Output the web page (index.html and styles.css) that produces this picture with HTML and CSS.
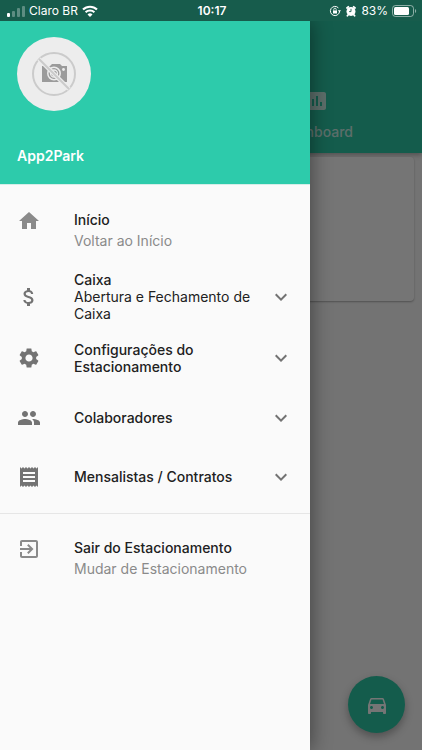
FILE: index.html
```html
<!DOCTYPE html>
<html lang="pt-BR">
<head>
<meta charset="utf-8">
<meta name="viewport" content="width=device-width, initial-scale=1">
<title>App2Park</title>
<link rel="stylesheet" href="styles.css">
</head>
<body>
<div class="screen">
  <div class="status">
    <div class="status-side">
      <svg class="signal" viewBox="0 0 18 12" aria-hidden="true">
        <rect x="0" y="8" width="3" height="4" rx="1" fill="#fff"/>
        <g fill="#fff" opacity=".3"><rect x="5" y="6" width="3" height="6" rx="1"/><rect x="10" y="3" width="3" height="9" rx="1"/><rect x="15" y="1" width="3" height="11" rx="1"/></g>
      </svg>
      <span>Claro BR</span>
      <svg class="wifi" viewBox="0 0 16 12" aria-hidden="true">
        <g fill="none" stroke="#fff" stroke-width="2.1"><path d="M1 4.6a10 10 0 0 1 14 0"/><path d="M3.6 7.3a6.3 6.3 0 0 1 8.8 0"/></g>
        <path d="M8 12 5.5 9.4a3.6 3.6 0 0 1 5 0z" fill="#fff"/>
      </svg>
    </div>
    <time class="clock">10:17</time>
    <div class="status-side status-end">
      <svg class="mini" viewBox="0 0 12 12" aria-hidden="true">
        <path d="M10.600 6A4.600 4.600 0 1 1 9.400 2.900" fill="none" stroke="#fff" stroke-width="1"/>
        <path d="M8.800 5.200h3.200L10.500 7.300z" fill="#fff"/>
        <rect x="4" y="5.500" width="4" height="3" fill="#fff"/>
        <path d="M4.800 5.600V4.400a1.200 1.200 0 0 1 2.400 0v1.200" fill="none" stroke="#fff" stroke-width=".8"/>
      </svg>
      <svg class="mini" viewBox="0 0 12 12" aria-hidden="true">
        <circle cx="6" cy="6.400" r="4.500" fill="#fff"/>
        <path d="M2 3 3.300 1.800M10 3 8.700 1.800M3 10l-.6.8M9 10l.6.8" stroke="#fff" stroke-width="1.800" stroke-linecap="round"/>
        <path d="M6 3.800v2.800H4.100" fill="none" stroke="#175c4c" stroke-width=".9"/>
      </svg>
      <span>83%</span>
      <svg class="battery" viewBox="0 0 25 12" aria-hidden="true">
        <rect x=".5" y=".5" width="21" height="11" rx="3" fill="none" stroke="#fff" opacity=".5"/>
        <rect x="2" y="2" width="15" height="8" rx="1.500" fill="#fff"/>
        <path d="M23 4v4c1.600-.6 1.600-3.400 0-4z" fill="#fff" opacity=".5"/>
      </svg>
    </div>
  </div>

  <div class="stage">
    <main class="page">
      <header class="appbar">
        <a class="tab" href="#">
          <svg class="icon" viewBox="0 0 24 24" aria-hidden="true"><path d="M19 3H5c-1.100 0-2 .9-2 2v14c0 1.100.9 2 2 2h14c1.100 0 2-.9 2-2V5c0-1.100-.9-2-2-2zM9 17H7v-7h2v7zm4 0h-2V7h2v10zm4 0h-2v-4h2v4z"/></svg>
          <span>Dashboard</span>
        </a>
      </header>
      <section class="card"></section>
      <button class="fab" type="button" aria-label="Carro">
        <svg class="icon" viewBox="0 0 24 24" aria-hidden="true"><path d="M18.920 6.010C18.720 5.420 18.160 5 17.500 5h-11c-.66 0-1.210.42-1.420 1.010L3 12v8c0 .55.45 1 1 1h1c.55 0 1-.45 1-1v-1h12v1c0 .55.45 1 1 1h1c.55 0 1-.45 1-1v-8l-2.080-5.990zM6.500 16c-.83 0-1.500-.67-1.500-1.500S5.670 13 6.500 13s1.500.67 1.500 1.500S7.330 16 6.500 16zm11 0c-.83 0-1.500-.67-1.500-1.500s.67-1.500 1.500-1.500 1.500.67 1.500 1.500-.67 1.500-1.500 1.500zM5 11l1.500-4.500h11L19 11H5z"/></svg>
      </button>
    </main>
    <div class="scrim"></div>

    <aside class="drawer">
      <header class="account">
        <div class="avatar">
          <svg viewBox="0 0 74 74" aria-hidden="true">
            <circle cx="37" cy="37" r="21" fill="none" stroke="#cbcbcb" stroke-width="2"/>
            <path d="M25 29h8l2-2h8l2 2h5v16H25z" fill="#9b9b9b"/>
            <circle cx="37" cy="36.500" r="6.200" fill="#9b9b9b" stroke="#ededed" stroke-width="1.500"/>
            <circle cx="37" cy="36.500" r="3.500" fill="none" stroke="#ededed" stroke-width="1.300"/>
            <circle cx="46.500" cy="32.500" r="1.400" fill="#ededed"/>
            <path d="M22 22 52 52" stroke="#ededed" stroke-width="4.500"/>
            <path d="M22 22 52 52" stroke="#cbcbcb" stroke-width="2"/>
          </svg>
        </div>
        <strong class="account-name">App2Park</strong>
      </header>

      <nav class="menu">
        <a class="item item-top" href="#">
          <svg class="icon light" viewBox="0 0 24 24" aria-hidden="true"><path d="M10 20v-6h4v6h5v-8h3L12 3 2 12h3v8z"/></svg>
          <span class="label"><span class="title">Início</span><span class="sub">Voltar ao Início</span></span>
        </a>
        <button class="item item-wrap" type="button" aria-expanded="false">
          <svg class="icon" viewBox="0 0 24 24" aria-hidden="true"><path d="M11.800 10.900c-2.270-.59-3-1.200-3-2.150 0-1.090 1.010-1.850 2.700-1.850 1.780 0 2.440.85 2.500 2.100h2.210c-.07-1.720-1.120-3.300-3.210-3.810V3h-3v2.160c-1.940.42-3.500 1.680-3.500 3.610 0 2.310 1.910 3.460 4.700 4.130 2.500.6 3 1.480 3 2.410 0 .69-.49 1.790-2.700 1.790-2.060 0-2.870-.92-2.980-2.100h-2.200c.12 2.190 1.760 3.420 3.680 3.830V21h3v-2.150c1.950-.37 3.500-1.500 3.500-3.550 0-2.840-2.430-3.810-4.700-4.400z"/></svg>
          <span class="label"><span class="title">Caixa</span><span>Abertura e Fechamento de Caixa</span></span>
          <svg class="icon" viewBox="0 0 24 24" aria-hidden="true"><path d="M16.590 8.590 12 13.170 7.410 8.590 6 10l6 6 6-6z"/></svg>
        </button>
        <button class="item item-wrap" type="button" aria-expanded="false">
          <svg class="icon" viewBox="0 0 24 24" aria-hidden="true"><path d="M19.140 12.940c.04-.3.060-.61.060-.94 0-.32-.02-.64-.07-.94l2.030-1.580c.18-.14.23-.41.12-.61l-1.920-3.320c-.12-.22-.37-.29-.59-.22l-2.390.96c-.5-.38-1.030-.7-1.620-.94l-.36-2.540c-.04-.24-.24-.41-.48-.41h-3.840c-.24 0-.43.17-.47.41l-.36 2.540c-.59.24-1.130.57-1.620.94l-2.390-.96c-.22-.08-.47 0-.59.22L2.740 8.870c-.12.21-.08.47.12.61l2.030 1.580c-.05.3-.09.63-.09.94s.02.64.07.94l-2.030 1.580c-.18.14-.23.41-.12.61l1.920 3.320c.12.22.37.29.59.22l2.390-.96c.5.38 1.030.7 1.620.94l.36 2.540c.05.24.24.41.48.41h3.840c.24 0 .44-.17.47-.41l.36-2.540c.59-.24 1.130-.56 1.620-.94l2.390.96c.22.08.47 0 .59-.22l1.920-3.320c.12-.22.07-.47-.12-.61l-2.010-1.580zM12 15.600c-1.980 0-3.600-1.620-3.600-3.600s1.620-3.600 3.600-3.600 3.600 1.620 3.600 3.600-1.620 3.600-3.600 3.600z"/></svg>
          <span class="label"><span class="title">Configurações do Estacionamento</span></span>
          <svg class="icon" viewBox="0 0 24 24" aria-hidden="true"><path d="M16.590 8.590 12 13.170 7.410 8.590 6 10l6 6 6-6z"/></svg>
        </button>
        <button class="item" type="button" aria-expanded="false">
          <svg class="icon" viewBox="0 0 24 24" aria-hidden="true"><path d="M16 11c1.660 0 2.990-1.340 2.990-3S17.660 5 16 5s-3 1.340-3 3 1.340 3 3 3zm-8 0c1.660 0 2.990-1.340 2.990-3S9.660 5 8 5 5 6.340 5 8s1.340 3 3 3zm0 2c-2.330 0-7 1.170-7 3.500V19h14v-2.500C15 14.170 10.330 13 8 13zm8 0c-.29 0-.62.02-.97.05 1.160.84 1.970 1.970 1.970 3.450V19h6v-2.500c0-2.330-4.670-3.500-7-3.500z"/></svg>
          <span class="label"><span class="title">Colaboradores</span></span>
          <svg class="icon" viewBox="0 0 24 24" aria-hidden="true"><path d="M16.590 8.590 12 13.170 7.410 8.590 6 10l6 6 6-6z"/></svg>
        </button>
        <button class="item" type="button" aria-expanded="false">
          <svg class="icon" viewBox="0 0 24 24" aria-hidden="true"><path d="M18 17H6v-2h12v2zm0-4H6v-2h12v2zm0-4H6V7h12v2zM3 22l1.500-1.500L6 22l1.500-1.500L9 22l1.500-1.500L12 22l1.500-1.500L15 22l1.500-1.500L18 22l1.500-1.500L21 22V2l-1.500 1.500L18 2l-1.500 1.500L15 2l-1.500 1.500L12 2l-1.500 1.500L9 2 7.500 3.500 6 2 4.500 3.500 3 2v20z"/></svg>
          <span class="label"><span class="title">Mensalistas / Contratos</span></span>
          <svg class="icon" viewBox="0 0 24 24" aria-hidden="true"><path d="M16.590 8.590 12 13.170 7.410 8.590 6 10l6 6 6-6z"/></svg>
        </button>
        <hr class="divider">
        <a class="item item-top" href="#">
          <svg class="icon light" viewBox="0 0 24 24" aria-hidden="true"><path d="M10.090 15.590 11.500 17l5-5-5-5-1.410 1.410L12.670 11H3v2h9.670l-2.580 2.590zM19 3H5c-1.110 0-2 .9-2 2v4h2V5h14v14H5v-4H3v4c0 1.100.89 2 2 2h14c1.100 0 2-.9 2-2V5c0-1.100-.9-2-2-2z"/></svg>
          <span class="label"><span class="title">Sair do Estacionamento</span><span class="sub">Mudar de Estacionamento</span></span>
        </a>
      </nav>
    </aside>
  </div>
</div>
</body>
</html>
```
FILE: styles.css
```css
* { box-sizing: border-box; }

body {
  margin: 0;
  font-family: Inter, Roboto, sans-serif;
  font-size: 14px;
  line-height: 17px;
  color: #212121;
}

a { color: inherit; text-decoration: none; }

button {
  border: 0;
  background: none;
  font: inherit;
  color: inherit;
  text-align: left;
}

.icon {
  flex: none;
  width: 24px;
  height: 24px;
  fill: #737373;
}

.icon.light { fill: #8a8a8a; }

.screen {
  display: flex;
  flex-direction: column;
  min-height: 100vh;
}

/* Status bar */
.status {
  display: grid;
  grid-template-columns: 1fr auto 1fr;
  align-items: center;
  height: 21px;
  padding: 0 5px 0 7px;
  background: #175c4c;
  color: #fff;
  font-size: 12px;
}

.status-side {
  display: flex;
  align-items: center;
  gap: 4px;
}

.status-end { justify-content: flex-end; }
.clock { font-weight: 600; }
.signal { width: 18px; height: 12px; }
.wifi { width: 16px; height: 12px; }
.mini { width: 12px; height: 12px; }
.battery { width: 25px; height: 12px; }

/* Page behind the drawer */
.stage {
  position: relative;
  display: flex;
  flex: 1;
  overflow: hidden;
}

.page {
  flex: 1;
  background: #fafafa;
}

.appbar {
  display: grid;
  grid-template-columns: 1fr 1fr;
  height: 132px;
  background: #2dc8a6;
  box-shadow: 0 2px 5px rgba(0, 0, 0, 0.3);
}

.tab {
  grid-column: 2;
  display: flex;
  flex-direction: column;
  align-items: center;
  justify-content: flex-end;
  gap: 10px;
  padding-bottom: 13px;
  color: #c8f0e7;
  font-weight: 500;
}

.tab .icon { fill: #c8f0e7; }

.card {
  height: 144px;
  margin: 4px 8px;
  border-radius: 4px;
  background: #fff;
  box-shadow: 0 1px 2px rgba(0, 0, 0, 0.3);
}

.fab {
  position: absolute;
  right: 17px;
  bottom: 17px;
  display: grid;
  place-items: center;
  width: 57px;
  height: 57px;
  padding: 0;
  border-radius: 50%;
  background: #2dc8a6;
  box-shadow: 0 4px 8px rgba(0, 0, 0, 0.3);
}

.fab .icon { fill: #fff; }

.scrim {
  position: absolute;
  inset: 0;
  background: rgba(0, 0, 0, 0.54);
}

/* Drawer */
.drawer {
  position: absolute;
  inset: 0 auto 0 0;
  width: 310px;
  max-width: 85%;
  background: #fafafa;
  box-shadow: 2px 0 18px rgba(0, 0, 0, 0.4);
}

.account {
  display: flex;
  flex-direction: column;
  justify-content: space-between;
  height: 164px;
  padding: 16px 17px 20px;
  border-bottom: 1px solid #d5ede8;
  background: #2dcbab;
  color: #fff;
}

.avatar {
  width: 74px;
  height: 74px;
  border-radius: 50%;
  background: #ededed;
}

.account-name { font-weight: 600; }

.menu {
  display: flex;
  flex-direction: column;
  padding-top: 8px;
}

.item {
  display: flex;
  align-items: center;
  gap: 33px;
  min-height: 59px;
  padding: 4px 17px;
}

.item-wrap { min-height: 61px; }

.item-top {
  align-items: flex-start;
  min-height: 73px;
  padding: 16px 17px;
}

.label {
  display: flex;
  flex: 1;
  flex-direction: column;
}

button .label { margin-right: -16px; }

.title { font-weight: 500; }

.item-top .label { gap: 4px; padding-top: 2px; }

.sub { color: #8a8a8a; }

.divider {
  width: 100%;
  margin: 7px 0;
  border: 0;
  border-top: 1px solid #e6e6e6;
}
```
